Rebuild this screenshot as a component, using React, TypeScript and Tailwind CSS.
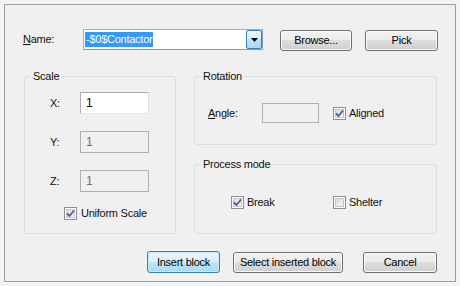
import type { ReactNode } from 'react';

const BTN =
  'h-[21px] rounded-[3px] border border-[#707070] bg-[linear-gradient(#f2f2f2_0%,#ebebeb_50%,#dddddd_50%,#cfcfcf_100%)] shadow-[inset_0_0_0_1px_#fbfbfb] text-black flex items-center justify-center';
const BTN_DEFAULT =
  'h-[21px] rounded-[3px] border border-[#3c7fb1] bg-[linear-gradient(#eaf6fd_0%,#d9f0fc_50%,#bee6fd_50%,#a7d9f5_100%)] shadow-[inset_0_0_0_1px_#c8e9fb] text-black flex items-center justify-center';

const Group = ({ title, className, children }: { title: string; className: string; children: ReactNode }) => (
  <div className={`relative rounded-[3px] border border-[#d5dfe5] ${className}`}>
    <span className="absolute -top-[8px] left-[6px] bg-[#f0f0f0] px-[2px] leading-[14px]">{title}</span>
    {children}
  </div>
);

const Check = ({ checked }: { checked?: boolean }) => (
  <span className="w-[13px] h-[13px] shrink-0 border border-[#8e8f8f] bg-white p-[1px] flex">
    <span className="flex-1 border border-[#c6c6c6] bg-[linear-gradient(135deg,#dcdcdc,#f6f6f6)] flex items-center justify-center">
      {checked && (
        <svg width="9" height="9" viewBox="0 0 9 9" className="-m-[1px]">
          <path d="M1 4.5 L3.5 7 L8 1.5" fill="none" stroke="#4a5f97" strokeWidth="1.8" />
        </svg>
      )}
    </span>
  </span>
);

const Field = ({ value, disabled, className }: { value?: string; disabled?: boolean; className: string }) => (
  <div
    className={`border ${
      disabled ? 'border-[#afafaf] bg-[#f0f0f0] text-[#6d6d6d]' : 'border-[#abadb3] border-b-[#e3e9ef] border-r-[#dbdfe6] bg-white text-black'
    } pl-[5px] flex items-center ${className}`}
  >
    {value}
  </div>
);

export default function App() {
  return (
    <div className="w-[460px] h-[286px] bg-[#f4f4f4] p-[4px] font-['Liberation_Sans',Arial,sans-serif] text-[11px] tracking-[-0.25px] text-[#111]">
      <div className="w-[452px] h-[278px] border border-[#a0a0a0] bg-[#f0f0f0] flex flex-col">
        {/* name row */}
        <div className="flex items-center mt-[23px] pl-[18px]">
          <span className="w-[60px]">
            <span className="underline">N</span>ame:
          </span>
          <div className="w-[180px] h-[21px] border border-[#7f9db9] border-l-[#abadb3] border-t-[#abadb3] bg-white flex items-center">
            <span className="ml-[1px] bg-[#3399ff] text-white px-[1px] leading-[15px]">-$0$Contactor</span>
            <span className="ml-auto w-[16px] h-[19px] rounded-[2px] border border-[#3c7fb1] bg-[linear-gradient(#eaf6fd_0%,#d9f0fc_50%,#bee6fd_50%,#a7d9f5_100%)] flex items-center justify-center">
              <svg width="7" height="4" viewBox="0 0 7 4">
                <path d="M0 0 H7 L3.5 4 Z" fill="#000" />
              </svg>
            </span>
          </div>
          <button className={`${BTN} w-[72px] ml-[17px] mt-[2px]`}>Browse...</button>
          <button className={`${BTN} w-[73px] ml-[13px] mt-[2px]`}>Pick</button>
        </div>

        {/* groups */}
        <div className="flex mt-[25px] pl-[19px]">
          <Group title="Scale" className="w-[152px] h-[158px]">
            <div className="flex flex-col gap-[17px] pt-[15px]">
              {['X:', 'Y:', 'Z:'].map((l, i) => (
                <div key={l} className="flex items-center pl-[25px]">
                  <span className="w-[30px]">{l}</span>
                  <Field value="1" disabled={i > 0} className="w-[69px] h-[22px] text-[12px]" />
                </div>
              ))}
            </div>
            <div className="flex items-center pl-[39px] mt-[13px]">
              <Check checked />
              <span className="ml-[4px]">Uniform Scale</span>
            </div>
          </Group>

          <div className="ml-[18px] flex flex-col">
            <Group title="Rotation" className="w-[243px] h-[69px]">
              <div className="flex items-center pt-[26px] pl-[13px]">
                <span className="w-[54px]">
                  <span className="underline">A</span>ngle:
                </span>
                <Field disabled className="w-[57px] h-[20px]" />
                <span className="ml-[14px]">
                  <Check checked />
                </span>
                <span className="ml-[3px]">Aligned</span>
              </div>
            </Group>
            <Group title="Process mode" className="w-[243px] h-[70px] mt-[19px]">
              <div className="flex items-center pt-[29px] pl-[36px]">
                <span className="w-[102px] flex items-center">
                  <Check checked />
                  <span className="ml-[3px]">Break</span>
                </span>
                <Check />
                <span className="ml-[3px]">Shelter</span>
              </div>
            </Group>
          </div>
        </div>

        {/* buttons */}
        <div className="flex mt-[17px] pl-[142px]">
          <button className={`${BTN_DEFAULT} w-[73px] h-[22px]`}>Insert block</button>
          <button className={`${BTN} w-[110px] ml-[13px] mt-[1px]`}>Select inserted block</button>
          <button className={`${BTN} w-[74px] ml-[20px] mt-[1px]`}>Cancel</button>
        </div>
      </div>
    </div>
  );
}
